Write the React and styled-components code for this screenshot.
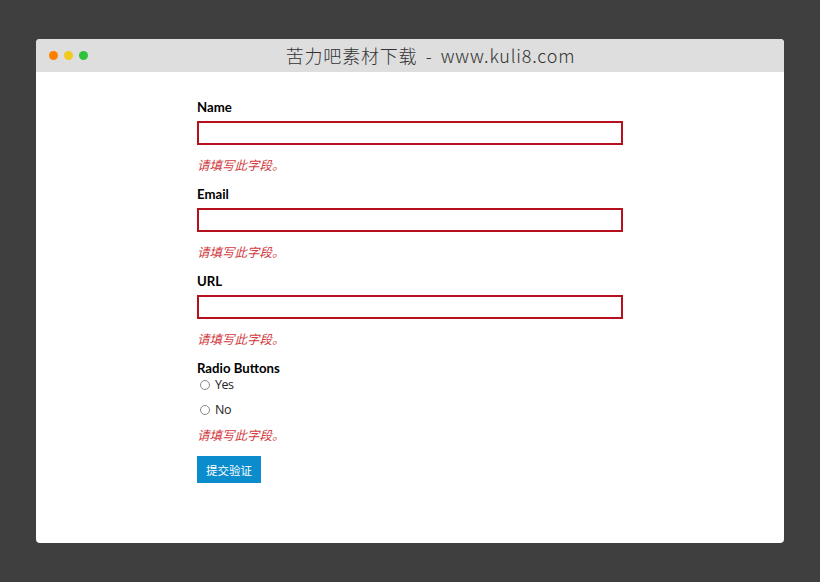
import React from 'react';
import styled, { createGlobalStyle } from 'styled-components';

const GlobalStyle = createGlobalStyle`
  html, body {
    margin: 0;
    padding: 0;
    background: #3f3f3f;
  }
  body {
    font-family: Lato, "Noto Sans CJK SC", sans-serif;
  }
`;

const Page = styled.div`
  width: 820px;
  height: 582px;
  padding: 39px 36px;
  box-sizing: border-box;
  overflow: hidden;
`;

const Browser = styled.div`
  height: 504px;
  background: #fff;
  border-radius: 4px;
  overflow: hidden;
`;

const TitleBar = styled.div`
  position: relative;
  height: 33px;
  background: #dedede;
  display: flex;
  align-items: center;
  justify-content: center;
`;

const Dots = styled.div`
  position: absolute;
  left: 13px;
  top: 12px;
  display: flex;
  gap: 6px;
`;

const Dot = styled.span`
  width: 9px;
  height: 9px;
  border-radius: 50%;
  background: ${p => p.$color};
`;

const Title = styled.div`
  font-family: "Noto Sans CJK SC", "Noto Sans", sans-serif;
  font-weight: 300;
  font-size: 18px;
  line-height: 33px;
  color: #333;
  letter-spacing: 0.8px;
  word-spacing: 3.5px;
  margin-left: 41px;
  white-space: pre;
`;

const Form = styled.form`
  width: 426px;
  margin-left: 161px;
  padding-top: 27px;
`;

const Field = styled.div`
  margin-bottom: 12px;
`;

const Label = styled.label`
  display: block;
  font-size: 13.2px;
  line-height: 17px;
  font-weight: 700;
  color: #000;
  margin-bottom: ${p => (p.$tight ? '-1px' : '5px')};
`;

const TextInput = styled.input`
  display: block;
  width: 100%;
  height: 24px;
  box-sizing: border-box;
  border: 2px solid #b5101c;
  background: #fff;
  padding: 0 4px;
  outline: none;
`;

const ErrorText = styled.div`
  font-family: "Noto Sans CJK SC", sans-serif;
  font-style: italic;
  font-size: 12.5px;
  line-height: 19px;
  color: #d03a40;
  margin-top: ${p => p.$top}px;
`;

const RadioRow = styled.label`
  display: flex;
  align-items: center;
  height: 17px;
  margin-bottom: 8px;
  padding-left: 3px;
  font-family: "Open Sans", sans-serif;
  font-size: 12.5px;
  letter-spacing: -0.5px;
  color: #222;
`;

const Radio = styled.input`
  width: 10px;
  height: 10px;
  margin: 0 5px 0 0;
  appearance: none;
  border: 1px solid #8a8a8a;
  border-radius: 50%;
  background: #fff;
`;

const SubmitButton = styled.button`
  display: block;
  width: 64px;
  height: 27px;
  padding: 0;
  border: 0;
  background: #0a8ccd;
  color: #fff;
  font-family: "Noto Sans CJK SC", sans-serif;
  font-size: 11.5px;
`;

const message = '请填写此字段。';

export default function App() {
  return (
    <Page>
      <GlobalStyle />
      <Browser>
        <TitleBar>
          <Dots>
            <Dot $color="#ff7f00" />
            <Dot $color="#f2ca1d" />
            <Dot $color="#2fc23c" />
          </Dots>
          <Title>苦力吧素材下载 - www.kuli8.com</Title>
        </TitleBar>
        <Form onSubmit={e => e.preventDefault()}>
          {['Name', 'Email', 'URL'].map(name => (
            <Field key={name}>
              <Label>{name}</Label>
              <TextInput type="text" />
              <ErrorText $top={10}>{message}</ErrorText>
            </Field>
          ))}
          <Field>
            <Label $tight>Radio Buttons</Label>
            <RadioRow><Radio type="radio" name="choice" />Yes</RadioRow>
            <RadioRow><Radio type="radio" name="choice" />No</RadioRow>
            <ErrorText $top={-1}>{message}</ErrorText>
          </Field>
          <SubmitButton type="submit">提交验证</SubmitButton>
        </Form>
      </Browser>
    </Page>
  );
}
